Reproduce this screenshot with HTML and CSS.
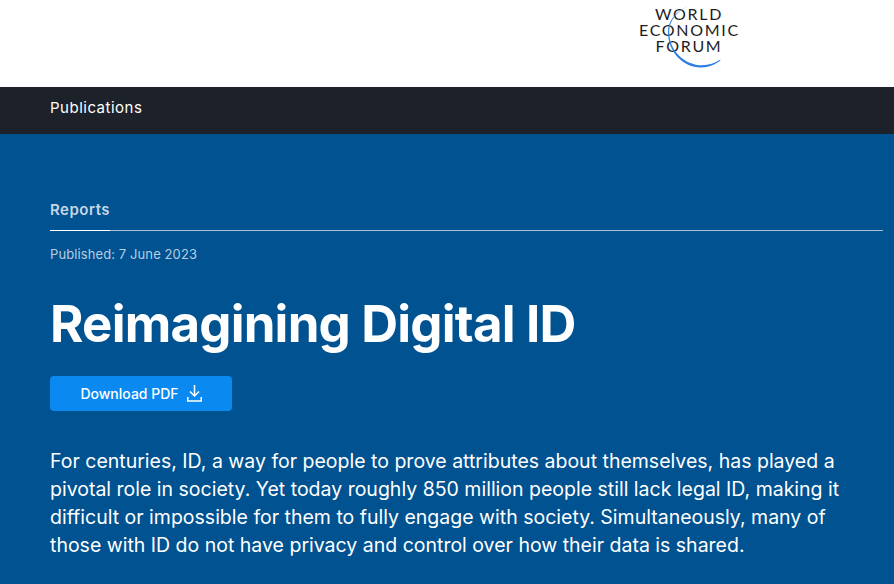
FILE: index.html
```html
<!DOCTYPE html>
<html lang="en">
<head>
<meta charset="utf-8">
<title>Reimagining Digital ID</title>
<link rel="stylesheet" href="styles.css">
</head>
<body>
<header class="top">
  <div class="logo">
    <svg class="logo-arc" width="70" height="70" viewBox="0 0 70 70" aria-hidden="true">
      <path d="M37 1C24 7 17 16 17 27C17 47 32 62.500 50 62.500C58 62.500 64 59.500 69.500 55.500L69 54.800C64 58 58 60.300 51 60.300C34 60.300 18.200 46 18.200 27C18.200 16 25 7 37 1Z" fill="#2a7de1"/>
    </svg>
    <div class="logo-text">WORLD<br>ECONOMIC<br>FORUM</div>
  </div>
</header>
<nav class="bar"><span class="bar-link">Publications</span></nav>
<main class="hero">
  <div class="tabs"><span class="tab">Reports</span></div>
  <p class="date">Published: 7 June 2023</p>
  <h1 class="title">Reimagining Digital ID</h1>
  <a class="btn" href="#">Download PDF
    <svg class="btn-icon" width="15" height="17" viewBox="0 0 15 17" aria-hidden="true">
      <path d="M7.500 0v11M3 6.500 7.500 11 12 6.500M.75 12v4h13.500v-4" fill="none" stroke="#fff" stroke-width="1.500"/>
    </svg>
  </a>
  <p class="lead">For centuries, ID, a way for people to prove attributes about themselves, has played a pivotal role in society. Yet today roughly 850 million people still lack legal ID, making it difficult or impossible for them to fully engage with society. Simultaneously, many of those with ID do not have privacy and control over how their data is shared.</p>
</main>
</body>
</html>
```
FILE: styles.css
```css
* { box-sizing: border-box; }
html, body { margin: 0; height: 584px; overflow: hidden; }
body { font-family: "Inter", "Noto Sans", "Liberation Sans", sans-serif; background: #005291; }
.top { height: 87px; background: #fff; display: flex; justify-content: flex-end; padding-right: 153px; }
.logo { position: relative; width: 102px; height: 87px; }
.logo-text { padding: 6px 2px 0 0; font-family: "Lato", sans-serif; font-size: 16px; line-height: 16px; letter-spacing: 1.700px; text-align: center; color: #1d1d1f; white-space: nowrap; }
.logo-arc { position: absolute; left: 12px; top: 5px; }
.bar { height: 47px; background: #1d2129; padding: 0 50px 6px; display: flex; align-items: center; }
.bar-link { color: #fff; font-size: 15px; letter-spacing: 0.500px; }
.hero { height: 450px; padding: 64px 11px 0 50px; color: #fff; }
.tabs { border-bottom: 1px solid rgba(255,255,255,.65); height: 33px; }
.tab { display: inline-block; width: 60px; height: 33px; border-bottom: 1px solid #fff; color: #c5d6e5; font-size: 15px; font-weight: 600; line-height: 24px; letter-spacing: 0.500px; white-space: nowrap; }
.date { margin: 14px 0 0; color: #b8cde0; font-size: 13px; line-height: 18px; letter-spacing: 0.100px; }
.title { margin: 31px 0 0; font-size: 51px; line-height: 60px; font-weight: 700; letter-spacing: -0.800px; white-space: nowrap; }
.btn { margin-top: 22px; width: 182px; height: 35px; background: #0a8af0; border-radius: 4px; display: flex; align-items: center; justify-content: center; gap: 8px; color: #fff; font-size: 14px; font-weight: 500; text-decoration: none; }
.lead { margin: 36px 0 0; width: 800px; font-size: 19.500px; line-height: 28px; color: #fff; }
```
